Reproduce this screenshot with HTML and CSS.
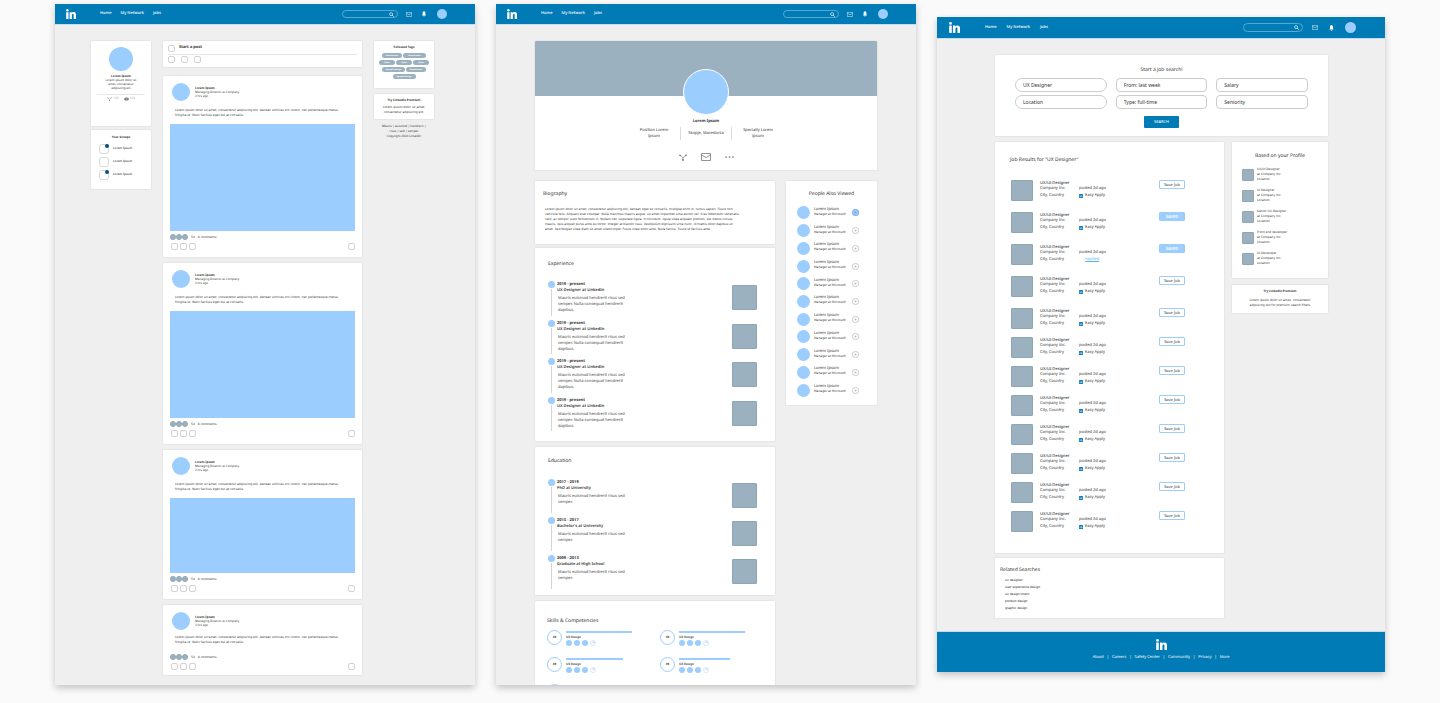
FILE: index.html
```html
<!DOCTYPE html>
<html lang="en">
<head>
<meta charset="utf-8">
<title>LinkedIn redesign</title>
<link rel="stylesheet" href="styles.css">
</head>
<body>
<svg class="sprite" aria-hidden="true">
  <symbol id="logo" viewBox="0 0 20 20"><circle cx="2.700" cy="2.500" r="2.500"/><rect x=".4" y="6.500" width="4.600" height="13.500"/><path d="M7.200 6.500h4.300v1.800c.8-1.300 2-2.100 4-2.100 3.400 0 4.500 2.200 4.500 5.700V20h-4.600v-7c0-1.900-.3-2.800-1.700-2.800-1.500 0-2 1-2 2.800v7H7.200z"/></symbol>
  <symbol id="search" viewBox="0 0 12 12"><circle cx="5" cy="5" r="3.600" fill="none" stroke="currentColor" stroke-width="1.500"/><path d="M7.600 7.600l3.600 3.400" stroke="currentColor" stroke-width="2"/></symbol>
  <symbol id="mail" viewBox="0 0 20 16"><path d="M1 1h18v14H1zM1 4l9 5 9-5" fill="none" stroke="currentColor" stroke-width="1.600"/></symbol>
  <symbol id="bell" viewBox="0 0 10 14"><path d="M5 0c2.500.5 3.500 2 3.500 4.500V8L10 10.500H0L1.500 8V4.500C1.500 2 2.500.5 5 0zM3.300 11.500h3.400c0 2.500-3.400 2.500-3.400 0z" fill="currentColor"/></symbol>
  <symbol id="share" viewBox="0 0 16 14"><path d="M2 3l6 4.500L14 3M8 7.500V12" fill="none" stroke="currentColor" stroke-width="1.300"/><circle cx="2" cy="2.500" r="1.700"/><circle cx="14" cy="2.500" r="1.700"/><circle cx="8" cy="12" r="1.800"/></symbol>
  <symbol id="eye" viewBox="0 0 16 10"><path d="M0 5c4-6.500 12-6.500 16 0-4 6.500-12 6.500-16 0z" fill="currentColor"/><circle cx="8" cy="5" r="2.600" fill="none" stroke="#fff" stroke-width="1.200"/></symbol>
  <symbol id="dots" viewBox="0 0 18 4"><circle cx="2" cy="2" r="1.700"/><circle cx="9" cy="2" r="1.700"/><circle cx="16" cy="2" r="1.700"/></symbol>
  <symbol id="plus" viewBox="0 0 14 14"><circle cx="7" cy="7" r="6.200" fill="none" stroke="currentColor" stroke-width="1.200"/><path d="M7 4.500v5M4.500 7h5" stroke="currentColor" stroke-width="1"/></symbol>
  <symbol id="mark" viewBox="0 0 8 8"><rect width="8" height="8" rx="1" fill="#0a7fc0"/><path d="M2 3.200v3M4 3.200v3M4 4.200q2-1.500 2 .300v1.700" stroke="#fff" fill="none"/></symbol>
</svg>
<main class="board">

<section class="screen">
  <header class="topbar">
    <a class="brand" href="#" aria-label="LinkedIn"><svg><use href="#logo"/></svg></a>
    <nav class="menu"><a href="#">Home</a><a href="#">My Network</a><a href="#">Jobs</a></nav>
    <label class="find"><input type="search" aria-label="Search"><svg><use href="#search"/></svg></label>
    <svg class="i-mail"><use href="#mail"/></svg><svg class="i-bell"><use href="#bell"/></svg><span class="me"></span>
  </header>
  <div class="feed">
    <aside class="side">
      <section class="card me-card">
        <span class="face"></span>
        <b>Lorem Ipsum</b>
        <p>Lorem ipsum dolor sit<br>amet, consectetur<br>adipiscing elit</p>
        <div class="stats"><span><svg><use href="#share"/></svg>123</span><span><svg><use href="#eye"/></svg>123</span></div>
      </section>
      <section class="card groups">
        <h2>Your Groups</h2>
        <ul><li><i class="box new"></i>Lorem Ipsum</li><li><i class="box"></i>Lorem Ipsum</li><li><i class="box new"></i>Lorem Ipsum</li></ul>
      </section>
    </aside>
    <div class="stream">
      <section class="card compose">
        <div class="start"><button class="sq" aria-label="Write"></button><b>Start a post</b></div>
        <div class="tools"><button class="sq" aria-label="Photo"></button><button class="sq" aria-label="Video"></button><button class="sq" aria-label="File"></button></div>
      </section>
      <article class="card post">
        <div class="by"><span class="ava"></span><div><b>Lorem Ipsum</b><p>Managing Director at Company</p><p>2 hrs ago</p></div></div>
        <p class="copy">Lorem ipsum dolor sit amet, consectetur adipiscing elit. Aenean ultricies orci lorem, nec pellentesque metus<br>fringilla ut. Nunc facilisis eget dui at convallis.</p>
        <div class="media"></div>
        <div class="likes"><i></i><i></i><i></i><span>54</span><span>8 comments</span></div>
        <div class="acts"><button class="sq" aria-label="Like"></button><button class="sq" aria-label="Comment"></button><button class="sq" aria-label="Share"></button><button class="sq" aria-label="Save"></button></div>
      </article>
      <article class="card post">
        <div class="by"><span class="ava"></span><div><b>Lorem Ipsum</b><p>Managing Director at Company</p><p>2 hrs ago</p></div></div>
        <p class="copy">Lorem ipsum dolor sit amet, consectetur adipiscing elit. Aenean ultricies orci lorem, nec pellentesque metus<br>fringilla ut. Nunc facilisis eget dui at convallis.</p>
        <div class="media"></div>
        <div class="likes"><i></i><i></i><i></i><span>54</span><span>8 comments</span></div>
        <div class="acts"><button class="sq" aria-label="Like"></button><button class="sq" aria-label="Comment"></button><button class="sq" aria-label="Share"></button><button class="sq" aria-label="Save"></button></div>
      </article>
      <article class="card post">
        <div class="by"><span class="ava"></span><div><b>Lorem Ipsum</b><p>Managing Director at Company</p><p>2 hrs ago</p></div></div>
        <p class="copy">Lorem ipsum dolor sit amet, consectetur adipiscing elit. Aenean ultricies orci lorem, nec pellentesque metus<br>fringilla ut. Nunc facilisis eget dui at convallis.</p>
        <div class="media short"></div>
        <div class="likes"><i></i><i></i><i></i><span>54</span><span>8 comments</span></div>
        <div class="acts"><button class="sq" aria-label="Like"></button><button class="sq" aria-label="Comment"></button><button class="sq" aria-label="Share"></button><button class="sq" aria-label="Save"></button></div>
      </article>
      <article class="card post plain">
        <div class="by"><span class="ava"></span><div><b>Lorem Ipsum</b><p>Managing Director at Company</p><p>2 hrs ago</p></div></div>
        <p class="copy">Lorem ipsum dolor sit amet, consectetur adipiscing elit. Aenean ultricies orci lorem, nec pellentesque metus<br>fringilla ut. Nunc facilisis eget dui at convallis.</p>
        <div class="likes"><i></i><i></i><i></i><span>54</span><span>8 comments</span></div>
        <div class="acts"><button class="sq" aria-label="Like"></button><button class="sq" aria-label="Comment"></button><button class="sq" aria-label="Share"></button><button class="sq" aria-label="Save"></button></div>
      </article>
    </div>
    <aside class="side right">
      <section class="card tags">
        <h2>Followed Tags</h2>
        <div><a href="#">#motivation</a><a class="wide" href="#">#motivation</a></div>
        <div><a class="slim" href="#">#jobs</a><a class="slim" href="#">#jobs</a><a class="slim" href="#">#jobs</a></div>
        <div><a class="wide" href="#">#graphicdesign</a><a href="#">#motivation</a></div>
        <div><a class="wide" href="#">#graphicdesign</a></div>
      </section>
      <section class="card promo"><b>Try LinkedIn Premium</b><p>Lorem ipsum dolor sit amet,<br>consectetur adipiscing elit.</p></section>
      <p class="legal">Mauris | euismod | hendrerit |<br>risus | sed | semper<br>Copyright 2020 LinkedIn</p>
    </aside>
  </div>
</section>

<section class="screen clipped">
  <header class="topbar">
    <a class="brand" href="#" aria-label="LinkedIn"><svg><use href="#logo"/></svg></a>
    <nav class="menu"><a href="#">Home</a><a href="#">My Network</a><a href="#">Jobs</a></nav>
    <label class="find"><input type="search" aria-label="Search"><svg><use href="#search"/></svg></label>
    <svg class="i-mail"><use href="#mail"/></svg><svg class="i-bell"><use href="#bell"/></svg><span class="me"></span>
  </header>
  <div class="profile">
    <section class="card hero">
      <div class="cover"></div>
      <span class="portrait"></span>
      <h1>Lorem Ipsum</h1>
      <div class="facts"><p>Position Lorem<br>Ipsum</p><p>Skopje, Macedonia</p><p>Specialty Lorem<br>Ipsum</p></div>
      <div class="links"><svg class="l-share"><use href="#share"/></svg><svg class="l-mail"><use href="#mail"/></svg><svg class="l-dots"><use href="#dots"/></svg></div>
    </section>
    <div class="split">
      <div class="about">
        <section class="card bio">
          <h2>Biography</h2>
          <p>Lorem ipsum dolor sit amet, consectetur adipiscing elit. Aenean eget ex convallis, tristique enim in, luctus sapien. Fusce non<br>vehicula felis. Aliquam erat volutpat. Nulla maximus mauris augue, sit amet imperdiet urna auctor vel. Cras bibendum venenatis<br>velit, ac tempor justo fermentum in. Nullam nec vulputate ligula. In tincidunt, ligula vitae aliquam pretium, est metus cursus<br>mauris, quis aliquet purus ante eu tortor. Integer at blandit risus. Vestibulum dignissim urna nunc, id mattis dolor dapibus sit<br>amet. Sed feugiat vitae diam sit amet ullamcorper. Fusce vitae dolor ante. Nulla facilisi. Fusce ut facilisis ante.</p>
        </section>
        <section class="card history">
          <h2>Experience</h2>
          <ol class="four">
            <li><i class="dot"></i><div><b>2019 - present</b><strong>UX Designer at LinkedIn</strong><p>Mauris euismod hendrerit risus sed<br>semper. Nulla consequat hendrerit<br>dapibus.</p></div><span class="thumb"></span></li>
            <li><i class="dot"></i><div><b>2019 - present</b><strong>UX Designer at LinkedIn</strong><p>Mauris euismod hendrerit risus sed<br>semper. Nulla consequat hendrerit<br>dapibus.</p></div><span class="thumb"></span></li>
            <li><i class="dot"></i><div><b>2019 - present</b><strong>UX Designer at LinkedIn</strong><p>Mauris euismod hendrerit risus sed<br>semper. Nulla consequat hendrerit<br>dapibus.</p></div><span class="thumb"></span></li>
            <li><i class="dot"></i><div><b>2019 - present</b><strong>UX Designer at LinkedIn</strong><p>Mauris euismod hendrerit risus sed<br>semper. Nulla consequat hendrerit<br>dapibus.</p></div><span class="thumb"></span></li>
          </ol>
        </section>
        <section class="card history school">
          <h2>Education</h2>
          <ol class="three">
            <li><i class="dot"></i><div><b>2017 - 2019</b><strong>PhD at University</strong><p>Mauris euismod hendrerit risus sed<br>semper.</p></div><span class="thumb"></span></li>
            <li><i class="dot"></i><div><b>2013 - 2017</b><strong>Bachelor's at University</strong><p>Mauris euismod hendrerit risus sed<br>semper.</p></div><span class="thumb"></span></li>
            <li><i class="dot"></i><div><b>2009 - 2013</b><strong>Graduate at High School</strong><p>Mauris euismod hendrerit risus sed<br>semper.</p></div><span class="thumb"></span></li>
          </ol>
        </section>
        <section class="card skills">
          <h2>Skills &amp; Competencies</h2>
          <ul>
            <li><span class="score">49</span><div><i class="bar" style="width:78%"></i><b>UX Design</b><p><i></i><i></i><i></i><i class="more">+45</i></p></div></li>
            <li><span class="score">49</span><div><i class="bar" style="width:78%"></i><b>UX Design</b><p><i></i><i></i><i></i><i class="more">+45</i></p></div></li>
            <li><span class="score">49</span><div><i class="bar" style="width:68%"></i><b>UX Design</b><p><i></i><i></i><i></i><i class="more">+45</i></p></div></li>
            <li><span class="score">49</span><div><i class="bar" style="width:61%"></i><b>UX Design</b><p><i></i><i></i><i></i><i class="more">+45</i></p></div></li>
            <li><span class="score"></span><div><i class="bar" style="width:46%"></i></div></li>
          </ul>
        </section>
      </div>
      <aside class="card people">
        <h2>People Also Viewed</h2>
        <ul>
          <li><i></i><div><b>Lorem Ipsum</b><p>Manager at Microsoft</p></div><button class="on" aria-label="Add"><svg><use href="#plus"/></svg></button></li>
          <li><i></i><div><b>Lorem Ipsum</b><p>Manager at Microsoft</p></div><button aria-label="Add"><svg><use href="#plus"/></svg></button></li>
          <li><i></i><div><b>Lorem Ipsum</b><p>Manager at Microsoft</p></div><button aria-label="Add"><svg><use href="#plus"/></svg></button></li>
          <li><i></i><div><b>Lorem Ipsum</b><p>Manager at Microsoft</p></div><button aria-label="Add"><svg><use href="#plus"/></svg></button></li>
          <li><i></i><div><b>Lorem Ipsum</b><p>Manager at Microsoft</p></div><button aria-label="Add"><svg><use href="#plus"/></svg></button></li>
          <li><i></i><div><b>Lorem Ipsum</b><p>Manager at Microsoft</p></div><button aria-label="Add"><svg><use href="#plus"/></svg></button></li>
          <li><i></i><div><b>Lorem Ipsum</b><p>Manager at Microsoft</p></div><button aria-label="Add"><svg><use href="#plus"/></svg></button></li>
          <li><i></i><div><b>Lorem Ipsum</b><p>Manager at Microsoft</p></div><button aria-label="Add"><svg><use href="#plus"/></svg></button></li>
          <li><i></i><div><b>Lorem Ipsum</b><p>Manager at Microsoft</p></div><button aria-label="Add"><svg><use href="#plus"/></svg></button></li>
          <li><i></i><div><b>Lorem Ipsum</b><p>Manager at Microsoft</p></div><button aria-label="Add"><svg><use href="#plus"/></svg></button></li>
          <li><i></i><div><b>Lorem Ipsum</b><p>Manager at Microsoft</p></div><button aria-label="Add"><svg><use href="#plus"/></svg></button></li>
        </ul>
      </aside>
    </div>
  </div>
</section>

<section class="screen jobs">
  <header class="topbar">
    <a class="brand" href="#" aria-label="LinkedIn"><svg><use href="#logo"/></svg></a>
    <nav class="menu"><a href="#">Home</a><a href="#">My Network</a><a href="#">Jobs</a></nav>
    <label class="find"><input type="search" aria-label="Search"><svg><use href="#search"/></svg></label>
    <svg class="i-mail"><use href="#mail"/></svg><svg class="i-bell"><use href="#bell"/></svg><span class="me"></span>
  </header>
  <div class="hunt">
    <form class="card query">
      <h2>Start a job search!</h2>
      <div class="fields">
        <input type="text" value="UX Designer" aria-label="Title">
        <select aria-label="Posted"><option>From: last week</option></select>
        <select aria-label="Salary"><option>Salary</option></select>
        <input type="text" value="Location" aria-label="Location">
        <select aria-label="Type"><option>Type: full-time</option></select>
        <select aria-label="Seniority"><option>Seniority</option></select>
      </div>
      <button type="button">SEARCH</button>
    </form>
    <div class="columns">
      <div class="found">
        <section class="card results">
          <h2>Job Results for "UX Designer"</h2>
          <ul>
            <li class="tall"><i></i><div><b>UX/UI Designer</b><p>Company Inc.</p><p class="low">City, Country</p></div><div class="when"><p>posted 2d ago</p><p class="low"><svg><use href="#mark"/></svg>Easy Apply</p></div><button>Save Job</button></li>
            <li class="tall"><i></i><div><b>UX/UI Designer</b><p>Company Inc.</p><p class="low">City, Country</p></div><div class="when"><p>posted 2d ago</p><p class="low"><svg><use href="#mark"/></svg>Easy Apply</p></div><button class="saved">SAVED</button></li>
            <li class="tall"><i></i><div><b>UX/UI Designer</b><p>Company Inc.</p><p class="low">City, Country</p></div><div class="when"><p>posted 2d ago</p><p class="low done"><a href="#">Applied</a></p></div><button class="saved">SAVED</button></li>
            <li class="tall"><i></i><div><b>UX/UI Designer</b><p>Company Inc.</p><p class="low">City, Country</p></div><div class="when"><p>posted 2d ago</p><p class="low"><svg><use href="#mark"/></svg>Easy Apply</p></div><button>Save Job</button></li>
            <li><i></i><div><b>UX/UI Designer</b><p>Company Inc.</p><p class="low">City, Country</p></div><div class="when"><p>posted 2d ago</p><p class="low"><svg><use href="#mark"/></svg>Easy Apply</p></div><button>Save Job</button></li>
            <li><i></i><div><b>UX/UI Designer</b><p>Company Inc.</p><p class="low">City, Country</p></div><div class="when"><p>posted 2d ago</p><p class="low"><svg><use href="#mark"/></svg>Easy Apply</p></div><button>Save Job</button></li>
            <li><i></i><div><b>UX/UI Designer</b><p>Company Inc.</p><p class="low">City, Country</p></div><div class="when"><p>posted 2d ago</p><p class="low"><svg><use href="#mark"/></svg>Easy Apply</p></div><button>Save Job</button></li>
            <li><i></i><div><b>UX/UI Designer</b><p>Company Inc.</p><p class="low">City, Country</p></div><div class="when"><p>posted 2d ago</p><p class="low"><svg><use href="#mark"/></svg>Easy Apply</p></div><button>Save Job</button></li>
            <li><i></i><div><b>UX/UI Designer</b><p>Company Inc.</p><p class="low">City, Country</p></div><div class="when"><p>posted 2d ago</p><p class="low"><svg><use href="#mark"/></svg>Easy Apply</p></div><button>Save Job</button></li>
            <li><i></i><div><b>UX/UI Designer</b><p>Company Inc.</p><p class="low">City, Country</p></div><div class="when"><p>posted 2d ago</p><p class="low"><svg><use href="#mark"/></svg>Easy Apply</p></div><button>Save Job</button></li>
            <li><i></i><div><b>UX/UI Designer</b><p>Company Inc.</p><p class="low">City, Country</p></div><div class="when"><p>posted 2d ago</p><p class="low"><svg><use href="#mark"/></svg>Easy Apply</p></div><button>Save Job</button></li>
            <li><i></i><div><b>UX/UI Designer</b><p>Company Inc.</p><p class="low">City, Country</p></div><div class="when"><p>posted 2d ago</p><p class="low"><svg><use href="#mark"/></svg>Easy Apply</p></div><button>Save Job</button></li>
          </ul>
        </section>
        <section class="card related">
          <h2>Related Searches</h2>
          <ul><li>ux designer</li><li>user experience design</li><li>ux design intern</li><li>product design</li><li>graphic design</li></ul>
        </section>
      </div>
      <aside class="extra">
        <section class="card based">
          <h2>Based on your Profile</h2>
          <ul>
            <li><i></i><p>UX/UI Designer<br>at Company Inc.<br>Location</p></li>
            <li><i></i><p>UI Designer<br>at Company Inc.<br>Location</p></li>
            <li><i></i><p>Senior UX Designer<br>at Company Inc.<br>Location</p></li>
            <li><i></i><p>Front end developer<br>at Company Inc.<br>Location</p></li>
            <li><i></i><p>UI Developer<br>at Company Inc.<br>Location</p></li>
          </ul>
        </section>
        <section class="card promo"><b>Try LinkedIn Premium</b><p>Lorem ipsum dolor sit amet, consectetur<br>adipiscing elit for premium search filters</p></section>
      </aside>
    </div>
  </div>
  <footer class="foot">
    <svg><use href="#logo"/></svg>
    <nav><a href="#">About</a><span>|</span><a href="#">Careers</a><span>|</span><a href="#">Safety Center</a><span>|</span><a href="#">Community</a><span>|</span><a href="#">Privacy</a><span>|</span><a href="#">More</a></nav>
  </footer>
</section>
</main>
</body>
</html>
```
FILE: styles.css
```css
:root {
  --brand: #007bb6;
  --sky: #9bcdff;
  --slate: #9cb1c0;
  --line: #d9d9d9;
  --ink: #333;
  --wide: "DejaVu Sans", "Noto Sans", sans-serif;
}
* { box-sizing: border-box; margin: 0; padding: 0; }
body {
  background: #fafafa;
  color: var(--ink);
  font: 3px/4px "Noto Sans", "Open Sans", sans-serif;
  text-rendering: geometricPrecision;
}
ul, ol { list-style: none; }
a { color: inherit; text-decoration: none; }
button, input, select { font: inherit; color: inherit; border: 0; background: none; appearance: none; }
h1, h2, b, strong { display: block; }
svg { display: block; fill: currentColor; }
.sprite { width: 0; height: 0; position: absolute; }

.board {
  display: grid;
  grid-template-columns: minmax(0, 420fr) minmax(0, 420fr) minmax(0, 448fr);
  gap: 21px;
  padding: 4px 55px 18px;
}
.screen { background: #efefef; box-shadow: 0 3px 7px rgba(0, 0, 0, .22); }
.clipped { contain: size; overflow: hidden; }
.jobs { align-self: center; }
.card { background: #fff; border-radius: 1px; box-shadow: 0 0 2px rgba(0, 0, 0, .14); }

/* top bar */
.topbar {
  display: flex; align-items: center;
  height: 21px; padding: 0 28px 0 11px;
  background: var(--brand); color: #fff;
  border-bottom: 1px solid #c3deec;
}
.brand svg { width: 10px; height: 10px; }
.menu { display: flex; gap: 9px; margin: 0 auto 0 24px; font-size: 4px; line-height: 8px; font-weight: 500; }
.find { display: flex; align-items: center; width: 56px; height: 8px; border: 1px solid #55a9d2; border-radius: 4px; padding-right: 3px; }
.find input { flex: 1; min-width: 0; height: 6px; outline: 0; }
.find svg { width: 5px; height: 5px; }
.i-mail { width: 6px; height: 5px; margin: 0 10px 0 8px; }
.i-bell { width: 4px; height: 6px; margin-right: 11px; }
.me { width: 10px; height: 10px; border-radius: 50%; background: var(--sky); }
.jobs .topbar { height: 22px; padding: 0 29px 0 12px; }
.jobs .brand svg { width: 11px; height: 11px; }
.jobs .menu { margin-left: 25px; gap: 10px; }
.jobs .find { width: 60px; height: 9px; border-radius: 5px; }
.jobs .i-mail { margin: 0 11px 0 9px; }
.jobs .i-bell { width: 5px; }
.jobs .me { width: 11px; height: 11px; }

/* feed */
.feed {
  display: grid;
  grid-template-columns: 60fr 199fr 60fr;
  column-gap: 12px;
  padding: 16px 41px 10px 36px;
}
.side h2 { font-size: 3px; line-height: 5px; text-align: center; font-weight: 700; }
.me-card { display: flex; flex-direction: column; align-items: center; padding: 6px 6px 25px; text-align: center; }
.face { width: 24px; height: 24px; border-radius: 50%; background: var(--sky); margin-bottom: 3px; }
.stats { display: flex; justify-content: center; gap: 5px; align-self: stretch; margin-top: 4px; padding-top: 1px; border-top: 1px solid #e6e6e6; color: #999; line-height: 5px; }
.stats span { display: flex; align-items: center; gap: 1px; }
.stats svg { width: 5px; height: 4px; color: #666; }
.groups { margin-top: 4px; padding: 5px 8px 9px; }
.groups ul { display: grid; gap: 3px; margin-top: 4px; }
.groups li { display: flex; gap: 4px; line-height: 8px; font-weight: 500; }
.box { position: relative; flex: none; width: 10px; height: 10px; border: 1px solid var(--line); border-radius: 3px; }
.new::after { content: ""; position: absolute; top: -1px; right: -1px; width: 4px; height: 4px; border-radius: 50%; background: #004f80; }

.sq { width: 7px; height: 7px; border: 1px solid #d2d2d2; border-radius: 2px; flex: none; }
.compose { padding: 3px 5px 4px; margin-bottom: 9px; }
.start { display: flex; align-items: center; gap: 4px; font-size: 4px; line-height: 8px; padding-bottom: 2px; border-bottom: 1px solid #e6e6e6; }
.tools { display: flex; gap: 6px; padding-top: 1px; }
.post { padding: 7px; margin-bottom: 6px; }
.post:last-child { margin-bottom: 0; }
.by { display: flex; align-items: center; gap: 5px; padding-left: 2px; }
.ava { width: 18px; height: 18px; border-radius: 50%; background: var(--sky); }
.copy { margin: 7px 0 6px; padding-left: 5px; font-family: var(--wide); line-height: 5px; white-space: nowrap; }
.media { height: 107px; background: var(--sky); }
.short { height: 75px; }
.likes { display: flex; align-items: center; height: 6px; margin-top: 3px; }
.likes i { width: 6px; height: 6px; border-radius: 50%; background: var(--slate); border: 1px solid #8fa6b5; }
.likes span { margin-left: 3px; font-family: var(--wide); }
.acts { display: flex; gap: 2px; margin-top: 3px; padding-left: 1px; }
.acts .sq:last-child { margin-left: auto; }
.plain { padding-bottom: 5px; }
.plain .copy { margin: 5px 0 9px; }

.tags { padding: 4px 3px 7px; }
.tags h2 { margin-bottom: 3px; }
.tags div { display: flex; justify-content: center; gap: 1px; margin-bottom: 2px; }
.tags a { width: 20px; height: 5px; border-radius: 3px; background: var(--slate); color: #fff; font-size: 2px; line-height: 5px; text-align: center; font-weight: 700; }
.tags .slim { width: 16px; }
.tags .wide { width: 23px; }
.promo { margin-top: 6px; padding: 4px 4px 4px; text-align: center; line-height: 5px; white-space: nowrap; }
.promo p { margin-top: 2px; font-family: var(--wide); }
.legal { margin-top: 5px; text-align: center; line-height: 5px; white-space: nowrap; }

/* profile */
.profile { padding: 16px 39px 0; }
.hero { display: flex; flex-direction: column; align-items: center; padding-bottom: 9px; }
.cover { align-self: stretch; height: 55px; background: var(--slate); border-radius: 1px 1px 0 0; }
.portrait { position: relative; width: 46px; height: 46px; margin-top: -27px; border: 1px solid #fff; border-radius: 50%; background: var(--sky); }
.hero h1 { margin-top: 4px; font-size: 4px; line-height: 6px; font-weight: 700; }
.facts { display: flex; justify-content: center; margin-top: 2px; font-size: 4px; line-height: 6px; text-align: center; }
.facts p { display: flex; align-items: center; justify-content: center; width: 52px; height: 13px; }
.facts p:nth-child(2) { border: solid var(--line); border-width: 0 1px; }
.links { display: flex; align-items: center; gap: 14px; margin-top: 13px; color: #777; }
.l-share { width: 8px; height: 7px; }
.l-mail { width: 10px; height: 8px; }
.l-dots { width: 9px; height: 2px; }
.split { display: grid; grid-template-columns: minmax(0, 240fr) minmax(0, 91fr); gap: 11px; align-items: start; margin-top: 11px; }
.profile h2, .hunt h2 { font-size: 5px; line-height: 7px; font-weight: 400; }
.bio { padding: 10px 8px 12px; }
.bio p { margin-top: 9px; padding-left: 2px; font-family: var(--wide); line-height: 5px; white-space: nowrap; }
.history { margin-top: 4px; padding: 13px 13px 8px; }
.school { margin-top: 6px; padding-top: 11px; padding-bottom: 4px; }
.history ol { display: grid; grid-auto-rows: 1fr; margin-top: 11px; }
.history .four { min-height: 154px; }
.school ol { margin-top: 12px; }
.three { min-height: 114px; }
.history li { position: relative; display: flex; gap: 2px; padding-top: 2px; font-size: 4px; line-height: 6px; }
.dot { width: 7px; height: 7px; border-radius: 50%; background: var(--sky); }
.history li::before { content: ""; position: absolute; left: 3px; top: 10px; bottom: 2px; width: 1px; background: #d5d5d5; }
.history b { line-height: 7px; }
.history strong { font-weight: 600; }
.history p { margin: 2px 0 0 1px; color: #444; }
.thumb { width: 25px; height: 25px; margin: 4px 5px 0 auto; background: var(--slate); border: 1px solid #8ea5b3; border-radius: 1px; }
.skills { margin-top: 6px; padding: 17px 12px; }
.skills ul { display: grid; grid-template-columns: 1fr 1fr; gap: 11px 10px; margin-top: 5px; }
.skills li { display: flex; gap: 4px; }
.skills div { flex: 1; padding-top: 1px; }
.score { width: 15px; height: 15px; border: 1px solid var(--sky); border-radius: 50%; text-align: center; line-height: 13px; font-weight: 700; }
.bar { display: block; height: 2px; background: var(--sky); }
.skills b { font-weight: 600; margin-top: 2px; }
.skills p { display: flex; gap: 2px; height: 6px; margin-top: 1px; }
.skills p i { width: 6px; height: 6px; border-radius: 50%; background: var(--sky); }
.skills .more { background: #fff; border: 1px solid #d5eaff; font: 2px/4px "Noto Sans", sans-serif; text-align: center; color: #999; }
.people { padding: 10px 18px 6px 11px; }
.people h2 { text-align: center; margin-right: -7px; }
.people ul { display: grid; grid-auto-rows: 1fr; min-height: 195px; margin-top: 6px; }
.people li { display: flex; align-items: center; gap: 4px; }
.people li > i { width: 13px; height: 13px; flex: none; border-radius: 50%; background: var(--sky); }
.people div { flex: 1; min-width: 0; white-space: nowrap; padding-bottom: 3px; }
.people p { font-family: var(--wide); }
.people b { font-weight: 400; font-size: 4px; line-height: 5px; }
.people button { width: 7px; height: 7px; color: #aaa; border-radius: 50%; }
.people .on { background: var(--sky); color: #6f9cc4; }
.people button svg { width: 7px; height: 7px; }

/* job search */
.hunt { padding: 16px 57px 13px 58px; }
.query { display: flex; flex-direction: column; align-items: center; padding: 12px 20px 8px; }
.fields { display: grid; grid-template-columns: repeat(3, 1fr); gap: 3px 9px; align-self: stretch; margin-top: 4px; font-size: 5px; }
.fields > * { width: 100%; min-width: 0; height: 14px; padding: 0 7px; border: 1px solid #ccc; border-radius: 4px; line-height: 10px; }
.fields input { border-radius: 7px; }
.query button { width: 35px; height: 12px; margin-top: 7px; background: var(--brand); color: #fff; border-radius: 1px; font-size: 4px; }
.columns { display: grid; grid-template-columns: minmax(0, 229fr) minmax(0, 96fr); gap: 8px; margin-top: 6px; }
.results { padding: 15px 39px 13px 15px; }
.results ul { margin: 16px 0 0 1px; }
.results li { display: flex; height: 29px; font-size: 4px; line-height: 5px; white-space: nowrap; }
.results .tall { height: 32px; }
.results li > i { width: 22px; height: 21px; margin-right: 7px; background: var(--slate); border: 1px solid #8ea5b3; border-radius: 1px; }
.results li > div { width: 39px; padding-top: 1px; }
.results b { font-weight: 500; }
.results .when { padding-top: 6px; }
.results .low { display: flex; align-items: center; gap: 2px; margin-top: 2px; }
.results .low svg { width: 4px; height: 4px; }
.results .done { padding-left: 6px; color: #5db4e8; text-decoration: underline; }
.results button { width: 26px; height: 9px; margin-left: auto; border: 1px solid var(--sky); border-radius: 1px; line-height: 7px; }
.results .saved { background: var(--sky); color: #fff; font-weight: 600; }
.related { margin-top: 5px; padding: 9px 5px 6px; }
.related ul { margin-top: 3px; padding-left: 5px; font-family: var(--wide); line-height: 7px; color: #111; }
.based { padding: 11px 10px 6px; }
.based h2 { text-align: center; white-space: nowrap; }
.based ul { margin-top: 7px; }
.based li { display: flex; gap: 3px; height: 21px; font-family: var(--wide); line-height: 5px; white-space: nowrap; }
.based i { width: 12px; height: 12px; margin-top: 2px; background: var(--slate); border: 1px solid #8ea5b3; border-radius: 1px; }
.extra .promo { margin-top: 7px; padding-bottom: 5px; }
.extra .promo p { margin-top: 4px; }
.foot { display: flex; flex-direction: column; align-items: center; gap: 4px; padding: 7px 0 10px; background: var(--brand); color: #fff; border-top: 1px solid #c3dbe8; }
.foot svg { width: 11px; height: 11px; }
.foot nav { display: flex; gap: 3px; font-size: 4px; line-height: 8px; }
```
